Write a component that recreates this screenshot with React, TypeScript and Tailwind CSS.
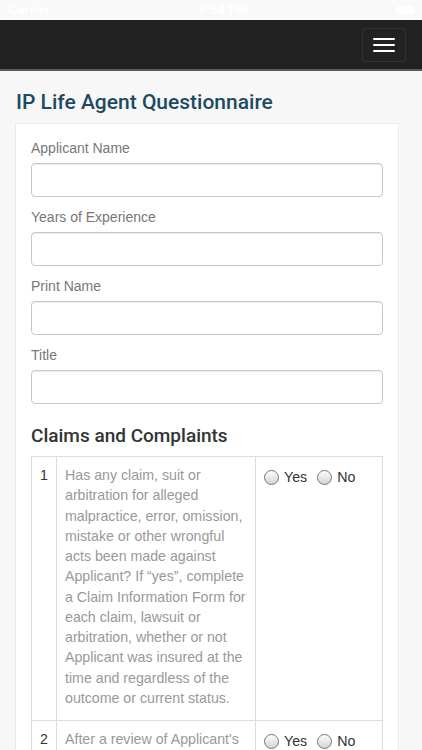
import { useState } from 'react';

const fields = ['Applicant Name', 'Years of Experience', 'Print Name', 'Title'];

// lines kept as in the form so the column wraps the same way
const questions: string[][] = [
  [
    'Has any claim, suit or',
    'arbitration for alleged',
    'malpractice, error, omission,',
    'mistake or other wrongful',
    'acts been made against',
    'Applicant? If \u201cyes\u201d, complete',
    'a Claim Information Form for',
    'each claim, lawsuit or',
    'arbitration, whether or not',
    'Applicant was insured at the',
    'time and regardless of the',
    'outcome or current status.',
  ],
  [
    "After a review of Applicant's",
    'records, is Applicant aware',
    'of any circumstance, act,',
    'error or omission that might',
    'reasonably be expected to',
    'result in a claim?',
  ],
];

function Radio({ checked, onClick }: { checked: boolean; onClick: () => void }) {
  return (
    <span
      onClick={onClick}
      className="inline-flex h-[15px] w-[15px] shrink-0 items-center justify-center rounded-full border border-[#777] bg-gradient-to-b from-[#fdfdfd] to-[#d4d4d4]"
    >
      {checked && <span className="h-[7px] w-[7px] rounded-full bg-[#333]" />}
    </span>
  );
}

export default function App() {
  const [answers, setAnswers] = useState<Record<number, string>>({});

  return (
    <div className="min-h-[750px] bg-[#f7f7f7] font-['Liberation_Sans',Arial,sans-serif]">
      {/* status bar */}
      <div className="flex h-5 items-center justify-between bg-[#f9f9f9] px-2 text-[13px] font-bold text-white">
        <span>Carrier</span>
        <span>6:54 PM</span>
        <span className="h-[8px] w-[18px] rounded-sm bg-white" />
      </div>

      {/* navbar */}
      <div className="flex h-[51px] items-center justify-end border-b-2 border-[#5a5a5a] bg-[#222] pr-4">
        <button
          type="button"
          className="flex h-[34px] w-[44px] flex-col items-center justify-center gap-[4px] rounded border border-[#333]"
        >
          <span className="h-[2px] w-[22px] rounded-sm bg-white" />
          <span className="h-[2px] w-[22px] rounded-sm bg-white" />
          <span className="h-[2px] w-[22px] rounded-sm bg-white" />
        </button>
      </div>

      <div className="pl-[15px]">
        <h1 className="pt-[19px] pb-[9px] pl-[1px] font-['Roboto',Arial,sans-serif] text-[21px] leading-[24px] font-medium text-[#1d4a63]">
          IP Life Agent Questionnaire
        </h1>

        <div className="w-[384px] border border-[#ececec] bg-white px-[15px] pt-[15px]">
          {fields.map((f) => (
            <div key={f} className="mb-[11px]">
              <label className="mb-[5px] block text-[14px] leading-[19px] text-[#777]">{f}</label>
              <input
                type="text"
                className="block h-[34px] w-full rounded border border-[#c8c8c8] shadow-[inset_0_1px_1px_rgba(0,0,0,0.075)] outline-none"
              />
            </div>
          ))}

          <h2 className="mt-[21px] mb-[9px] font-['Roboto',Arial,sans-serif] text-[19px] leading-[22px] font-medium text-[#333]">
            Claims and Complaints
          </h2>

          <table className="w-full table-fixed border-collapse border border-[#ddd] text-[14.2px] leading-[20.25px]">
            <colgroup>
              <col className="w-[25px]" />
              <col className="w-[199px]" />
              <col />
            </colgroup>
            <tbody>
              {questions.map((lines, i) => (
                <tr key={i}>
                  <td className="border border-[#ddd] pl-[8px] pt-[8px] pb-[12px] align-top text-[#333]">{i + 1}</td>
                  <td className="border border-[#ddd] pl-[8px] pt-[8px] pb-[12px] align-top whitespace-nowrap text-[#999]">
                    {lines.map((l) => (
                      <div key={l}>{l}</div>
                    ))}
                  </td>
                  <td className="border border-[#ddd] px-[8px] pt-[10px] align-top text-[#333]">
                    <div className="flex items-center whitespace-nowrap">
                      <Radio checked={answers[i] === 'yes'} onClick={() => setAnswers({ ...answers, [i]: 'yes' })} />
                      <span className="ml-[5px] mr-[10px]">Yes</span>
                      <Radio checked={answers[i] === 'no'} onClick={() => setAnswers({ ...answers, [i]: 'no' })} />
                      <span className="ml-[5px]">No</span>
                    </div>
                  </td>
                </tr>
              ))}
            </tbody>
          </table>
        </div>
      </div>
    </div>
  );
}
